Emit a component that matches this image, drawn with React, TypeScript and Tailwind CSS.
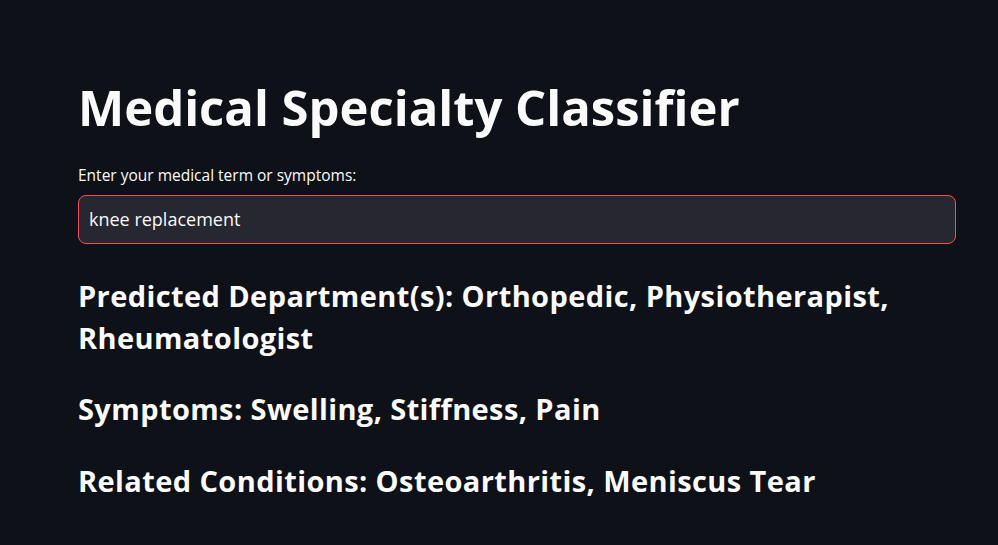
export default function App() {
  return (
    <div className="min-h-[545px] w-full bg-[#0e1117] text-[#fafafa]" style={{ fontFamily: '"Open Sans", "Noto Sans", sans-serif' }}>
      <div className="flex flex-col pl-[78px] pr-[42px] pt-[78px]">
        <h1 className="text-[49px] font-bold leading-[1.2]">Medical Specialty Classifier</h1>
        <label className="mt-[28px] text-[15.5px] leading-[20px]">Enter your medical term or symptoms:</label>
        <div className="mt-[10px] flex h-[49px] items-center rounded-[8px] border border-[#ff4b4b] bg-[#262730] px-[10px] text-[18px]">
          knee replacement
        </div>
        <h3 className="mt-[31px] text-[29px] font-bold leading-[42px] tracking-[0.4px]">Predicted Department(s): Orthopedic, Physiotherapist, Rheumatologist</h3>
        <h3 className="mt-[29px] text-[29px] font-bold leading-[42px] tracking-[0.4px]">Symptoms: Swelling, Stiffness, Pain</h3>
        <h3 className="mt-[30px] text-[29px] font-bold leading-[42px] tracking-[0.4px]">Related Conditions: Osteoarthritis, Meniscus Tear</h3>
      </div>
    </div>
  );
}
